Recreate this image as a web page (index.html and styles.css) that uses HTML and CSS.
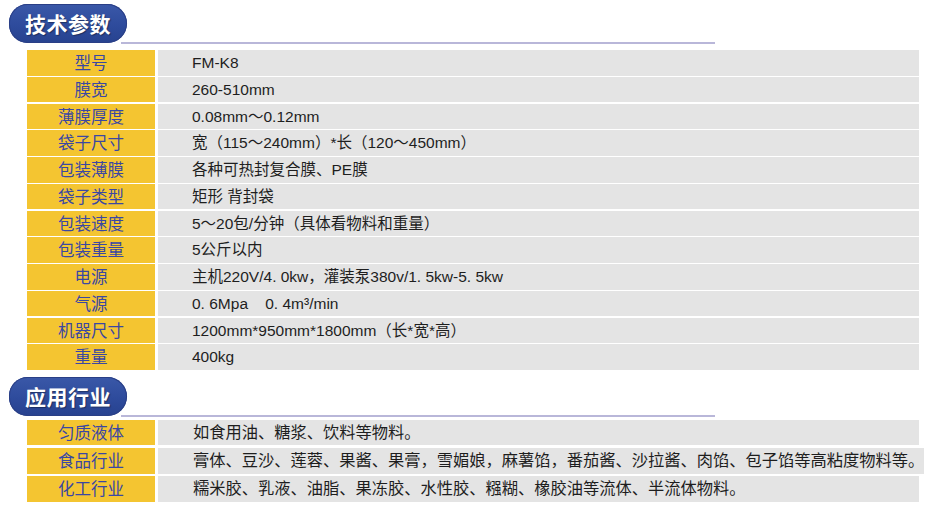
FILE: index.html
```html
<!DOCTYPE html>
<html lang="zh">
<head>
<meta charset="utf-8">
<title>技术参数</title>
<link rel="stylesheet" href="styles.css">
</head>
<body>
<section class="sec sec-spec">
  <div class="head"><h2 class="pill">技术参数</h2><div class="rule"></div></div>
  <div class="table">
    <div class="row"><div class="lab">型号</div><div class="val">FM-K8</div></div>
    <div class="row"><div class="lab">膜宽</div><div class="val">260-510mm</div></div>
    <div class="row"><div class="lab">薄膜厚度</div><div class="val">0.08mm～0.12mm</div></div>
    <div class="row"><div class="lab">袋子尺寸</div><div class="val">宽（115～240mm）*长（120～450mm）</div></div>
    <div class="row"><div class="lab">包装薄膜</div><div class="val">各种可热封复合膜、PE膜</div></div>
    <div class="row"><div class="lab">袋子类型</div><div class="val">矩形 背封袋</div></div>
    <div class="row"><div class="lab">包装速度</div><div class="val">5～20包/分钟（具体看物料和重量）</div></div>
    <div class="row"><div class="lab">包装重量</div><div class="val">5公斤以内</div></div>
    <div class="row"><div class="lab">电源</div><div class="val">主机220V/4. 0kw，灌装泵380v/1. 5kw-5. 5kw</div></div>
    <div class="row"><div class="lab">气源</div><div class="val">0. 6Mpa&nbsp;&nbsp;&nbsp;&nbsp;0. 4m³/min</div></div>
    <div class="row"><div class="lab">机器尺寸</div><div class="val">1200mm*950mm*1800mm（长*宽*高）</div></div>
    <div class="row"><div class="lab">重量</div><div class="val">400kg</div></div>
  </div>
</section>
<section class="sec sec-app">
  <div class="head"><h2 class="pill">应用行业</h2><div class="rule"></div></div>
  <div class="table">
    <div class="row"><div class="lab">匀质液体</div><div class="val">如食用油、糖浆、饮料等物料。</div></div>
    <div class="row"><div class="lab">食品行业</div><div class="val">膏体、豆沙、莲蓉、果酱、果膏，雪媚娘，麻薯馅，番茄酱、沙拉酱、肉馅、包子馅等高粘度物料等。</div></div>
    <div class="row"><div class="lab">化工行业</div><div class="val">糯米胶、乳液、油脂、果冻胶、水性胶、糨糊、橡胶油等流体、半流体物料。</div></div>
  </div>
</section>
</body>
</html>
```
FILE: styles.css
```css
html, body {
  margin: 0;
  padding: 0;
  background: #ffffff;
}
body {
  font-family: "Liberation Sans", "Noto Sans CJK SC", sans-serif;
  width: 930px;
  height: 516px;
  overflow: hidden;
}
.sec-spec {
  padding-top: 4px;
}
.sec-app {
  padding-top: 7px;
}
.head {
  display: flex;
  align-items: flex-end;
  margin-left: 9px;
  width: 706px;
}
.pill {
  margin: 0;
  width: 118px;
  height: 39px;
  box-sizing: border-box;
  border-radius: 19px 20px 20px 19px;
  background: linear-gradient(180deg, #3a58a8 0%, #2e4b9c 55%, #27428f 100%);
  box-shadow: inset 0 0 0 1px #2a3f86;
  color: #ffffff;
  font-family: "Noto Sans CJK SC", sans-serif;
  font-weight: 700;
  font-size: 21px;
  line-height: 39px;
  letter-spacing: 0.5px;
  padding-left: 16px;
  text-shadow: 1px 1px 1px rgba(0, 0, 0, 0.35);
  flex: none;
}
.rule {
  flex: 1;
  height: 2px;
  background: #b9b7d9;
  margin-left: -6px;
  margin-bottom: -1px;
}
.table {
  margin-left: 27px;
  width: 892px;
  display: flex;
  flex-direction: column;
}
.sec-spec .table {
  margin-top: 7px;
  gap: 1.25px;
}
.sec-app .table {
  margin-top: 4px;
  gap: 2.75px;
}
.row {
  display: flex;
  height: 25.5px;
  gap: 3px;
}
.lab {
  width: 128px;
  flex: none;
  background: #f4c531;
  color: #3a47a3;
  font-family: "Noto Sans CJK SC", sans-serif;
  font-size: 16.5px;
  line-height: 25.5px;
  text-align: center;
}
.val {
  flex: 1;
  background: #e4e4e4;
  color: #1e1e1e;
  font-size: 15.5px;
  line-height: 25.5px;
  padding-left: 34px;
  white-space: nowrap;
}
.sec-app .val {
  padding-left: 35px;
  font-size: 16.25px;
}
```
